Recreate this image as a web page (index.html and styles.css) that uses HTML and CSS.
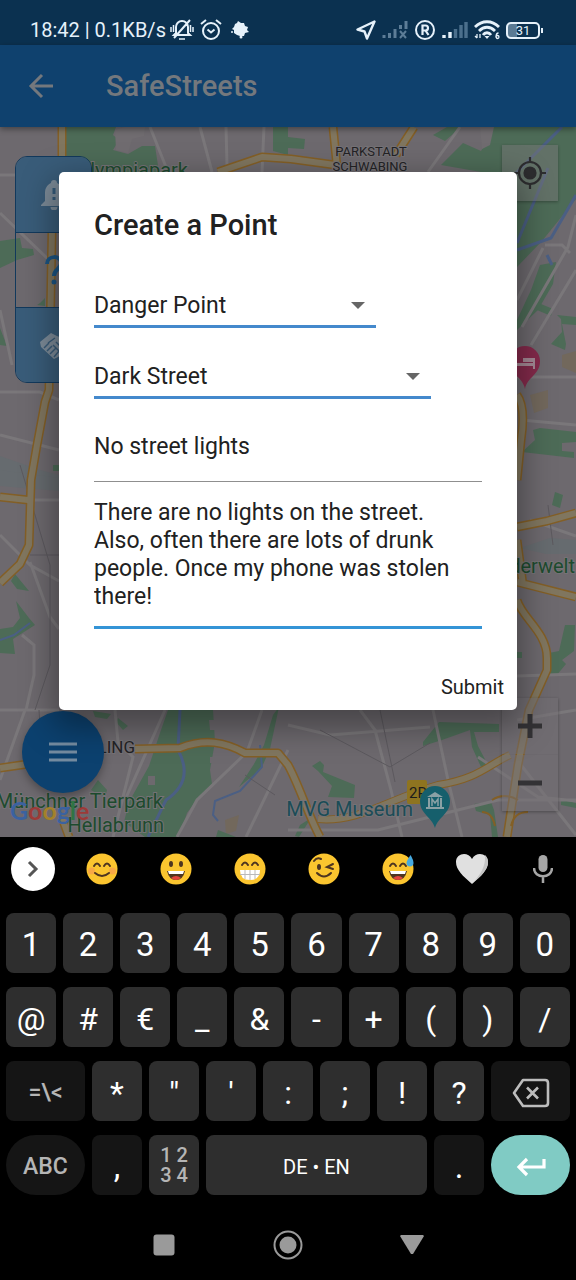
FILE: index.html
```html
<!DOCTYPE html>
<html lang="en">
<head>
<meta charset="utf-8">
<meta name="viewport" content="width=device-width, initial-scale=1">
<title>SafeStreets</title>
<link rel="stylesheet" href="styles.css">
</head>
<body>
<div class="screen">
  <div class="status">
    <span class="status-text">18:42 | 0.1KB/s</span>
    <svg class="status-bell" width="24" height="24" viewBox="0 0 24 24" fill="none" stroke="currentColor" stroke-width="2"><path d="M6 15V9a6 6 0 0 1 12 0v6l2 2H4zM20 2L4 20"/><path d="M9 21h6M1 9v5M23 9v5M3.500 7v7M20.500 7v7" stroke-width="1.500"/></svg>
    <svg class="status-alarm" width="22" height="22" viewBox="0 0 22 22" fill="none" stroke="currentColor" stroke-width="2"><circle cx="11" cy="12" r="8"/><path d="M7.500 10.500l3.500 3 3.500-3M1 5l5-4M21 5l-5-4"/></svg>
    <svg class="status-bug" width="20" height="20" viewBox="0 0 20 20" fill="currentColor"><path d="M5 4l2-1 1-2 3 2 3 0 1 3 3 1-1 3 2 2-4 1-1 3-4 0-3-1-3-2 0-3-2-1 2-2z"/><circle cx="11" cy="17" r="1.500"/><circle cx="2" cy="12" r="1"/></svg>
    <div class="status-right">
      <svg width="20" height="20" viewBox="0 0 20 20" fill="none" stroke="currentColor" stroke-width="2.400" stroke-linejoin="round"><path d="M18.500 1.500L1.500 9.500l7 2 2.500 7z"/></svg>
      <svg width="26" height="18" viewBox="0 0 26 18" fill="none" stroke="#5d7d97" stroke-width="3"><path d="M2 17v-3M7.500 17v-5M13 17V8M18.500 8V4M24 8V0"/><path d="M18 10l6 7M24 10l-6 7" stroke-width="2"/></svg>
      <svg width="22" height="22" viewBox="0 0 22 22" fill="none" stroke="currentColor" stroke-width="2"><circle cx="11" cy="11" r="9"/><path d="M8.500 16V6.500h3a2.500 2.500 0 0 1 0 5h-3M11.500 11.500l3 4.500" stroke-width="2.200"/></svg>
      <svg width="26" height="18" viewBox="0 0 26 18" fill="none" stroke-width="3.400"><path d="M2 17v-3M8 17v-6" stroke="#e6f1fa"/><path d="M13.500 17V8M19 17V4M24 17V1" stroke="#4b6f8c"/></svg>
      <svg width="26" height="20" viewBox="0 0 26 20" fill="none" stroke="currentColor" stroke-width="2.800"><path d="M1 7c7-7 17-7 24 0M5 11c5-5 11-5 16 0M9 15c2-3 6-3 8 0"/><path d="M10.500 16l2.500 3 2.500-3z" stroke="none" fill="currentColor"/><path d="M24.500 13c-3 0-3 5.500-1 5.500s2-3 0-3-1.500 1-1.500 2M3 14v4M1 16l2 2M6 14v4" stroke-width="1.300"/></svg>
      <span class="battery"><span class="battery-body">31</span><span class="battery-tip"></span></span>
    </div>
  </div>

  <header class="appbar">
    <button class="back" aria-label="Back"><svg width="28" height="28" viewBox="0 0 28 28" fill="none" stroke="currentColor" stroke-width="3"><path d="M26 14H4M15 3L4 14l11 11"/></svg></button>
    <h1 class="app-title">SafeStreets</h1>
  </header>

  <main class="map">
    <svg class="map-canvas" viewBox="0 127 576 710" preserveAspectRatio="xMidYMid slice" aria-hidden="true">
      <rect x="-50" y="100" width="700" height="800" fill="#6d696e"/>
      <g fill="#666b6f">
        <path d="M0 465l59 12v14L0 486z"/><path d="M0 456l40 14 19 5v3L0 470z"/><path d="M520 548l30-10 26 2v14h-30z"/>
      </g>
      <g fill="#72685c"><path d="M530 395l18-5 0 18-14 5z"/><path d="M562 355l14-4v22l-14-6z"/><path d="M225 820l14-5-3 16-10 3z"/></g>
      <g fill="#4d6b57">
        <path d="M66 127h50l-3 8 6 5-6 10 15 4 14-8 13 0 4 26H88l-22-15z"/>
        <path d="M273 127h15v28l-15-4z"/><path d="M288 137l17 2-1 10-16-1z"/>
        <path d="M487 127h89v72l-34 42-25 26v-92l-36-3-40-7 22-22 18 8 8-14z"/>
        <path d="M433 135l14-8h14l-16 14z"/>
        <path d="M540 265l16-3-3 22-15 26-21 20v-10l14-30z"/>
        <path d="M541 304l12 5-2 7-14-6zM557 315l19 2v8l-14-1 4 20-1 6-14-6 11-12-1-13z"/>
        <path d="M0 241l20-3 2 10 11 1 1 6-17 5-17 8zM40 303l5-5v8l-8-1z"/><path d="M0 328l7 18-7-1z"/>
        <path d="M15 574l14 17-12-2-6-8zM53 465h6v6h-6zM0 629l13-2 7-9-4-17 13 17 6 7-22 14 2 15-15-1z"/>
        <path d="M522 452l13-12-2-10 7-2 36 4v10l-14 1v8l12 1v6z"/><path d="M555 492l8 3-3 13-8-3z"/>
        <path d="M565 625h10l-1 26-12 9 4 4-10 12-8 0 3-14-2-9 10-2zM517 652l5 0v6h-5z"/>
        <path d="M168 710h45l2 32-5 28 2 14-14 14-11 15-8 24h-34l-21-15 5-20 20-36 12-36z"/>
        <path d="M93 711l18 3-4 5-12-2zM118 718l10 8-5 4-7-8zM98 780l9 10-2 8-14-8z"/>
        <path d="M423 742l16-20 60 2v8l-25 0 4 14 11 21h-8l-9-20-2-17-28 10-19 6z"/>
        <path d="M312 766l8-5 4 4-1 7 32 13-1 13-26-1 4-11-14-15z"/>
        <path d="M474 804l17-2 3 8 4 27h-6l-2-22-14-4zM561 799l15 4v5l-15-3zM300 825l11-7-12 19-4-1z"/>
        <path d="M218 830l18 7h-20zM273 715l6-8-9 42-9 20-22 18 15-23 10-19z"/>
      </g>
      <path d="M115 130l10-3h20l-1 9-12 3-4 14-12-3z" fill="#706c70"/>
      <path d="M480 127h14l-4 18-8 4z" fill="#706c70"/>
      <path d="M148 776h7v9h-7zM209 720h8v10h-7zM210 757h6v6h-6z" fill="#6d696e"/>
      <g fill="none" stroke="#4b5f84" stroke-width="3">
        <path d="M576 195l-25 43-34 12M548 168l-31 75M562 127l-50 50M547 255l5 10M180 710l-2 40c12 22 6 38-12 50l-18 37"/>
        <path d="M0 640l14-5 16-12M260 745l2 22-22 24-25 10-2 14 5 6" stroke-width="2"/>
      </g>
      <g fill="none" stroke="#7a777a" stroke-width="3">
        <path d="M150 127l18 45M200 127l12 45M226 127l1 38M264 127l-2 45M0 175h15M0 213l48 46M0 310l12 55M0 435l59 15M0 392h40l19 8M28 500h31M0 535l30 30 29 16M30 562l20 55 9 12M22 635l12 10v30l-8 35M0 710h59M517 300l26-52M460 127l-32 45M545 245h17l8 8M576 215l-8 32-46 80M576 270l-45 75M517 377h59M521 420l55 5M530 520l46 16M517 676l59-2"/>
        <path d="M25 710L0 780M115 710l3 32 15 15-20 80M165 710l-40 90M262 710l-15 42-50 48-20 37M288 750l-42 87M360 710l15 20 16 60 11 47M288 725l42 10 100-8M433 710l15 70 14 57M288 830h90l120-30h78M521 765l55 70M517 720l59-10M478 757l60 40 38 4"/>
      </g>
      <g fill="none" stroke="#5c595e" stroke-width="1">
        <path d="M380 710l15 72M20 465l30 100v100l-15 45M39 710l2 30M320 730l70 37 40-24M245 775l30 20M30 555h29M548 505l5 40"/>
      </g>
      <g fill="none" stroke="#835f26" stroke-width="9" stroke-linejoin="round">
        <path d="M62 127v31M52 230l-3 160-4 12-8 43-6 35-2 65-9 19-20 19M0 497l28 3M218 172l44-15 29 2 44 6M333 127l4 40M414 127l-18 28M517 395q9 12 4 45l-4 40M517 527l30-6 29-8M517 540l6 45M517 582l59 15M517 600c5 18 30 32 30 58v12l-18 40-11 55-11 72M0 768l28-4M135 749l45-1c25-10 45-6 65 5h33l10 12c12 22 20 50 32 72M62 818l7 19"/>
        <path d="M318 819c40 4 70-20 120-34 40-6 50-20 72-30" stroke-width="8"/>
      </g>
      <g fill="none" stroke="#80765f" stroke-width="6" stroke-linejoin="round">
        <path d="M62 127v31M52 230l-3 160-4 12-8 43-6 35-2 65-9 19-20 19M0 497l28 3M218 172l44-15 29 2 44 6M333 127l4 40M414 127l-18 28M517 395q9 12 4 45l-4 40M517 527l30-6 29-8M517 540l6 45M517 582l59 15M517 600c5 18 30 32 30 58v12l-18 40-11 55-11 72M0 768l28-4M135 749l45-1c25-10 45-6 65 5h33l10 12c12 22 20 50 32 72M62 818l7 19M318 819c40 4 70-20 120-34 40-6 50-20 72-30"/>
      </g>
      <path d="M482 812q10 0 13 14M528 812q-14 0-17 14M492 800q12-8 26 0" fill="none" stroke="#835f26" stroke-width="2"/>
      <g class="map-label">
        <text class="label-green" x="188" y="177" text-anchor="end" font-size="20">Olympiapark</text>
        <text x="371" y="156" text-anchor="middle" font-size="13">PARKSTADT</text>
        <text x="370" y="171" text-anchor="middle" font-size="13">SCHWABING</text>
        <text x="135" y="753" text-anchor="end" font-size="17">LING</text>
        <text class="label-green" x="163" y="808" text-anchor="end" font-size="20">Münchner Tierpark</text>
        <text class="label-green" x="164" y="832" text-anchor="end" font-size="20">Hellabrunn</text>
        <text class="label-green" x="575" y="573" text-anchor="end" font-size="20">derwelt</text>
        <text class="label-teal" x="413" y="816" text-anchor="end" font-size="20">MVG Museum</text>
      </g>
      <rect x="407" y="780" width="20" height="24" rx="2" fill="#8e7420"/>
      <text x="409" y="798" font-size="15" fill="#1c1c1c">2R</text>
      <path d="M435 828c-3-11-15-14-15-27a15 15 0 0 1 30 0c0 13-12 16-15 27z" fill="#165f6c"/>
      <path d="M427 797l8-5 8 5zM428 798h2v9h-2zM440 798h2v9h-2zM426 807h18v2h-18z" fill="#8aa1a5"/>
      <path d="M432 806v-7l3 4 3-4v7" fill="none" stroke="#8aa1a5" stroke-width="1.500"/>
      <path d="M525 389c-2-12-15-14-15-28a15 15 0 0 1 30 0c0 14-13 16-15 28z" fill="#842a4b"/>
      <path d="M515 358h2v5h16v-5h2v11h-2v-3h-16v3h-2z" fill="#a48a95"/><path d="M523 358h10v4h-10z" fill="#a48a95"/>
    </svg>

    <div class="tools">
      <button class="tool tool-on" aria-label="Danger"><svg width="26" height="30" viewBox="0 0 26 30" fill="#7c8b98"><path d="M13 0a3 3 0 0 1 3 3c4 2 6 5 6 10v8l4 4v1H0v-1l4-4v-8c0-5 2-8 6-10a3 3 0 0 1 3-3zM9.500 27h7a3.500 3.500 0 0 1-7 0z"/><path d="M13 8v6M13 17v3" stroke="#345a7a" stroke-width="3"/></svg></button>
      <button class="tool" aria-label="Question"><svg width="18" height="30" viewBox="0 0 18 30" fill="none" stroke="#1c5583" stroke-width="4"><path d="M2 9c0-9 14-9 14-1 0 6-7 6-7 13"/><circle cx="9" cy="27" r="2.500" fill="#1c5583" stroke="none"/></svg></button>
      <button class="tool tool-on" aria-label="Help"><svg width="32" height="30" viewBox="0 0 32 30" fill="#7c8b98"><path d="M2 12L13 3l6 3 8 3 4 6-3 4-4 5-4 3-4 2L3 17z"/><path d="M17 8l-7 5M6 18l5-5M9 21l5-5M12 24l6-6M16 27l5-6M18 12l8 8M15 15l8 8" fill="none" stroke="#395c79" stroke-width="1.500"/></svg></button>
    </div>
    <button class="map-btn locate" aria-label="My location"><svg width="32" height="32" viewBox="0 0 32 32" fill="none" stroke="#2d2d2f" stroke-width="2.200"><circle cx="16" cy="16" r="11"/><circle cx="16" cy="16" r="5.500" fill="#2d2d2f"/><path d="M16 0v5M16 27v5M0 16h5M27 16h5"/></svg></button>
    <div class="zoom">
      <button class="map-btn" aria-label="Zoom in"><svg width="26" height="26" viewBox="0 0 26 26" stroke="#333235" stroke-width="5"><path d="M13 1v24M1 13h24"/></svg></button>
      <button class="map-btn" aria-label="Zoom out"><svg width="26" height="26" viewBox="0 0 26 26" stroke="#333235" stroke-width="5"><path d="M1 13h24"/></svg></button>
    </div>
    <button class="fab" aria-label="Menu"><svg width="28" height="20" viewBox="0 0 28 20" stroke="#748ba0" stroke-width="3"><path d="M0 2h28M0 10h28M0 18h28"/></svg></button>
    <div class="logo"><span class="g-blue">G</span><span class="g-red">o</span><span class="g-yellow">o</span><span class="g-blue">g</span><span class="g-green">l</span><span class="g-red">e</span></div>

    <form class="dialog" role="dialog" aria-labelledby="dialog-title">
      <div class="dialog-body">
        <h2 class="dialog-title" id="dialog-title">Create a Point</h2>
        <div class="pick pick-type">
          <select class="field pick-select" aria-label="Point type"><option>Danger Point</option></select>
          <svg class="caret" width="14" height="7" viewBox="0 0 14 7" fill="#666"><path d="M0 0h14L7 7z"/></svg>
        </div>
        <div class="pick pick-kind">
          <select class="field pick-select" aria-label="Danger kind"><option>Dark Street</option></select>
          <svg class="caret" width="14" height="7" viewBox="0 0 14 7" fill="#666"><path d="M0 0h14L7 7z"/></svg>
        </div>
        <input class="field name" aria-label="Title" value="No street lights">
        <textarea class="field details" aria-label="Description" rows="4">There are no lights on the street.
Also, often there are lots of drunk people. Once my phone was stolen there!</textarea>
      </div>
      <div class="actions"><button class="submit" type="button">Submit</button></div>
    </form>
  </main>

  <section class="keyboard" aria-label="Keyboard">
    <div class="suggest">
      <button class="expand" aria-label="More"><svg width="12" height="18" viewBox="0 0 12 18" fill="none" stroke="#555" stroke-width="3"><path d="M2 2l7 7-7 7"/></svg></button>
      <button class="emoji" aria-label="Smiling face"><svg width="32" height="32" viewBox="0 0 32 32"><circle cx="16" cy="16" r="15.500" fill="#fbc52f"/><circle cx="5.500" cy="18" r="3.500" fill="#f8a845"/><circle cx="26.500" cy="18" r="3.500" fill="#f8a845"/><path d="M8 13q3-5 6 0M18 13q3-5 6 0M9 20q7 6 14 0" fill="none" stroke="#4e3520" stroke-width="2" stroke-linecap="round"/></svg></button>
      <button class="emoji" aria-label="Grinning face"><svg width="32" height="32" viewBox="0 0 32 32"><circle cx="16" cy="16" r="15.500" fill="#fbc52f"/><ellipse cx="11" cy="11" rx="2" ry="3" fill="#4e3520"/><ellipse cx="21" cy="11" rx="2" ry="3" fill="#4e3520"/><path d="M7 18h18q-2 9-9 9T7 18z" fill="#4e3520"/><path d="M8 18h16l-1 3H9z" fill="#fff"/><path d="M11 25q5-4 10 0-5 4-10 0z" fill="#e2453c"/></svg></button>
      <button class="emoji" aria-label="Beaming face"><svg width="32" height="32" viewBox="0 0 32 32"><circle cx="16" cy="16" r="15.500" fill="#fbc52f"/><path d="M8 12q3-5 6 0M18 12q3-5 6 0" fill="none" stroke="#4e3520" stroke-width="2" stroke-linecap="round"/><path d="M6 17h20q0 10-10 10T6 17z" fill="#fff"/><path d="M6 21.500h20M11 17v9M16 17v10M21 17v9" stroke="#b9b9b9"/></svg></button>
      <button class="emoji" aria-label="Winking face"><svg width="32" height="32" viewBox="0 0 32 32"><circle cx="16" cy="16" r="15.500" fill="#fbc52f"/><ellipse cx="11" cy="14" rx="2" ry="3" fill="#4e3520"/><path d="M6 8q3-4 7-2M25 11l-6 3 6 2M9 20q7 7 14 0" fill="none" stroke="#4e3520" stroke-width="2" stroke-linecap="round"/></svg></button>
      <button class="emoji" aria-label="Grinning face with sweat"><svg width="32" height="32" viewBox="0 0 32 32"><circle cx="16" cy="16" r="15.500" fill="#fbc52f"/><path d="M8 13q3-5 6 0M18 13q3-5 6 0" fill="none" stroke="#4e3520" stroke-width="2" stroke-linecap="round"/><path d="M7 18h18q-2 9-9 9T7 18z" fill="#4e3520"/><path d="M8 18h16l-1 3H9z" fill="#fff"/><path d="M11 25q5-4 10 0-5 4-10 0z" fill="#e2453c"/><path d="M28.500 2q-4 6-4 8a3.500 3.500 0 0 0 7 0q0-3-3-8z" fill="#46a9e0"/></svg></button>
      <button class="emoji" aria-label="White heart"><svg width="34" height="32" viewBox="0 0 34 32"><path d="M17 31C8 23 1 17 1 9 1 0 13-2 17 6 21-2 33 0 33 9c0 8-7 14-16 22z" fill="#e0e0e0"/><path d="M17 31c9-8 16-14 16-22 0-3-1-5-3-7 1 12-5 20-13 29z" fill="#c4c4c4"/></svg></button>
      <button class="emoji" aria-label="Voice input"><svg width="20" height="28" viewBox="0 0 20 28"><rect x="5.500" y="0" width="9" height="17" rx="4.500" fill="#a6a6a6"/><path d="M1 13c0 11 18 11 18 0M10 21v7" fill="none" stroke="#a6a6a6" stroke-width="2.500"/></svg></button>
    </div>
    <div class="keys">
      <div class="row"><button class="key">1</button><button class="key">2</button><button class="key">3</button><button class="key">4</button><button class="key">5</button><button class="key">6</button><button class="key">7</button><button class="key">8</button><button class="key">9</button><button class="key">0</button></div>
      <div class="row"><button class="key sym">@</button><button class="key sym">#</button><button class="key sym">€</button><button class="key sym">_</button><button class="key sym">&amp;</button><button class="key sym">-</button><button class="key sym">+</button><button class="key sym">(</button><button class="key sym">)</button><button class="key sym">/</button></div>
      <div class="row"><button class="key side">=\&lt;</button><button class="key sym">*</button><button class="key sym">"</button><button class="key sym">'</button><button class="key sym">:</button><button class="key sym">;</button><button class="key sym">!</button><button class="key sym">?</button><button class="key side" aria-label="Delete"><svg width="38" height="30" viewBox="0 0 38 30" fill="none" stroke="#bdbdbd" stroke-width="2.600" stroke-linejoin="round"><path d="M11 2h22q3 0 3 3v20q0 3-3 3H11L2 15zM15 9.500l11 11M26 9.500l-11 11"/></svg></button></div>
      <div class="row"><button class="key side pill">ABC</button><button class="key dark">,</button><button class="key numpad"><span>1 2</span><span>3 4</span></button><button class="key space">DE • EN</button><button class="key dark">.</button><button class="key side pill enter" aria-label="Enter"><svg width="30" height="20" viewBox="0 0 30 20" fill="none" stroke="#fff" stroke-width="3.200"><path d="M28 2v8H3M11 2l-8 8 8 8"/></svg></button></div>
    </div>
  </section>

  <nav class="sysnav">
    <button class="sys" aria-label="Recents"><svg width="22" height="22" viewBox="0 0 22 22"><rect width="21" height="21" x=".5" y=".5" rx="3" fill="#9a9a9a"/></svg></button>
    <button class="sys" aria-label="Home"><svg width="30" height="30" viewBox="0 0 30 30"><circle cx="15" cy="15" r="13.500" fill="none" stroke="#9a9a9a" stroke-width="2"/><circle cx="15" cy="15" r="8.500" fill="#9a9a9a"/></svg></button>
    <button class="sys" aria-label="Back"><svg width="24" height="20" viewBox="0 0 24 20"><path d="M1 0h22l1 1-11 18h-2L0 1z" fill="#9a9a9a"/></svg></button>
  </nav>
</div>
</body>
</html>
```
FILE: styles.css
```css
* { box-sizing: border-box; }
body { margin: 0; background: #000; font-family: Roboto, "Liberation Sans", sans-serif; }
button { display: flex; align-items: center; justify-content: center; padding: 0; border: 0; background: none; color: inherit; font: inherit; }
svg { flex: none; }
h1, h2 { margin: 0; font-weight: 500; }

.screen { display: flex; flex-direction: column; min-height: 100vh; }

.status { display: flex; align-items: center; height: 45px; padding: 15px 33px 0 30px; background: #0b3150; color: #e6f1fa; }
.status-text { font-size: 20px; font-weight: 400; line-height: 24px; }
.status-bell { margin-left: 4px; }
.status-alarm { margin-left: 6px; }
.status-bug { margin-left: 8px; }
.status-right { display: flex; align-items: center; gap: 6px; margin-left: auto; }
.battery { display: flex; align-items: center; gap: 1px; }
.battery-body { width: 34px; height: 17px; border: 2px solid #e6f1fa; border-radius: 5px; background: linear-gradient(90deg, #5b7a93 30%, transparent 30%); font-size: 13px; line-height: 13px; text-align: center; }
.battery-tip { width: 2px; height: 5px; background: #e6f1fa; }

.appbar { position: relative; z-index: 1; display: flex; align-items: center; height: 82px; padding: 0 27px; gap: 51px; background: #0f416e; color: #74787d; box-shadow: 0 2px 6px rgba(0, 0, 0, 0.4); }
.app-title { font-size: 29px; line-height: 36px; }

.map { position: relative; display: flex; height: 710px; overflow: hidden; }
.map-canvas { width: 100%; height: 100%; }
.map-label { fill: #232225; paint-order: stroke; stroke: #757276; stroke-width: 2px; }
.label-green { fill: #1d4b2e; }
.label-teal { fill: #1b4c57; }

.tools { position: absolute; left: 15px; top: 29px; width: 77px; border: 1px solid #12395c; border-radius: 12px; overflow: hidden; }
.tool { width: 100%; height: 75px; }
.tool + .tool { border-top: 1px solid #12395c; }
.tool-on { background: #395c79; }
.map-btn { width: 56px; height: 56px; background: rgba(120, 120, 120, 0.5); }
.locate { position: absolute; right: 18px; top: 18px; box-shadow: 0 1px 3px rgba(0, 0, 0, 0.3); }
.zoom { position: absolute; right: 18px; bottom: 26px; display: flex; flex-direction: column; gap: 1px; box-shadow: 0 1px 3px rgba(0, 0, 0, 0.3); }
.zoom .map-btn { background: rgba(115, 112, 115, 0.5); }
.fab { position: absolute; left: 22px; bottom: 44px; width: 82px; height: 82px; border-radius: 50%; background: #0c416f; box-shadow: 0 4px 8px rgba(0, 0, 0, 0.3); }
.logo { position: absolute; left: 10px; bottom: 11px; font-family: Lato, sans-serif; font-size: 25px; line-height: 32px; font-weight: 700; }
.g-blue { color: #3b62a0; }
.g-red { color: #9c3a38; }
.g-yellow { color: #a3812a; }
.g-green { color: #2f7545; }

.dialog { position: absolute; left: 59px; right: 59px; top: 45px; border-radius: 5px; background: #fff; color: #212121; box-shadow: 0 12px 32px 6px rgba(0, 0, 0, 0.35); }
.dialog-body { display: flex; flex-direction: column; padding: 35px 35px 0; }
.dialog-title { margin-bottom: 40px; font-size: 29px; line-height: 36px; }
.field { display: block; width: 100%; padding: 0; border: 0; border-radius: 0; outline: 0; background: none; color: inherit; font: inherit; font-size: 23px; line-height: 28px; }
.pick { display: grid; align-items: center; margin-bottom: 26px; }
.pick-type { width: 282px; }
.pick-kind { width: 337px; margin-bottom: 12px; }
.pick-select { grid-area: 1 / 1; height: 45px; padding-top: 4px; border-bottom: 3px solid #4489cc; appearance: none; }
.caret { grid-area: 1 / 1; justify-self: end; margin-right: 11px; pointer-events: none; }
.name { height: 71px; border-bottom: 1px solid #8f8f8f; }
.details { height: 147px; padding: 17px 0 15px; border-bottom: 3px solid #3494d6; resize: none; overflow: hidden; }
.actions { display: flex; justify-content: flex-end; padding: 40px 13px 5px; }
.submit { height: 36px; font-size: 20px; line-height: 24px; }

.keyboard { padding-bottom: 15px; background: #000; color: #fff; }
.suggest { display: grid; grid-template-columns: 65fr repeat(6, 74fr) 67fr; align-items: center; justify-items: center; height: 64px; }
.expand { width: 44px; height: 44px; border-radius: 50%; background: #fff; }
.keys { display: flex; flex-direction: column; gap: 14px; padding: 12px 6px 0; }
.row { display: flex; gap: 7px; }
.key { flex: 50 1 0; min-width: 0; height: 60px; padding-top: 4px; border-radius: 8px; background: #2e2e2e; font-size: 33px; line-height: 40px; }
.sym { font-size: 32px; }
.side { flex-grow: 79; background: #151515; color: #b5b5b5; font-size: 23px; font-weight: 500; }
.dark { background: #151515; }
.pill { border-radius: 30px; }
.space { flex-grow: 221; font-size: 20px; }
.numpad { flex-direction: column; padding-top: 0; color: #b5b5b5; font-size: 20px; line-height: 20px; font-weight: 500; }
.enter { background: #80cbc4; }

.sysnav { display: flex; align-items: center; justify-content: center; gap: 94px; height: 70px; }
.sys { width: 30px; height: 30px; }
```
